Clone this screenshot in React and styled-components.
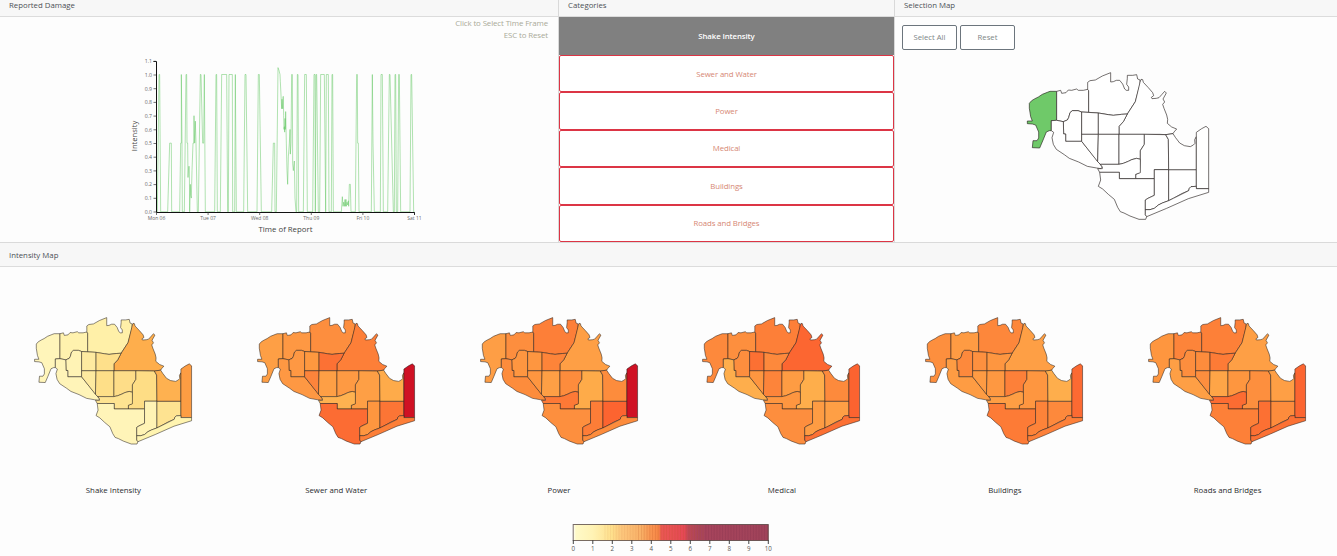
import React from 'react';
import styled, { createGlobalStyle } from 'styled-components';

const Global = createGlobalStyle`
  * { box-sizing: border-box; }
  html, body { margin: 0; padding: 0; }
  body {
    width: 1337px; height: 556px; overflow: hidden; background: #fdfdfd;
    font-family: "Open Sans", "Noto Sans", sans-serif; font-size: 7.8px; color: #4c5056;
  }
`;

const Page = styled.main`
  display: grid;
  grid-template-rows: 242px 314px;
  height: 556px;
`;
const TopRow = styled.div`
  display: grid;
  grid-template-columns: 558px 336px 443px;
`;
const Panel = styled.section`
  display: flex;
  flex-direction: column;
  min-width: 0;
  border-left: ${p => (p.$divided ? '1px solid #d9d9d9' : '0')};
`;
const Header = styled.header`
  flex: none;
  height: ${p => (p.$full ? 25 : 17)}px;
  padding: ${p => (p.$full ? '6px 9px 0' : '0 9px')};
  line-height: ${p => (p.$full ? 12 : 11)}px;
  background: #f7f7f7;
  border-bottom: 1px solid #dcdcdc;
  border-top: ${p => (p.$full ? '1px solid #dadada' : '0')};
`;
const Hints = styled.div`
  height: 26px;
  padding-right: 10px;
  text-align: right;
  line-height: 12px;
  font-size: 7.9px;
  letter-spacing: -0.12px;
  color: #aaaa98;
`;
const Chart = styled.svg`
  display: block;
  margin-left: 120px;
`;
const Categories = styled.div`
  display: grid;
  grid-template-rows: 38px repeat(5, 1fr);
  flex: 1;
`;
const Category = styled.button`
  font: inherit;
  font-size: 7.8px;
  letter-spacing: -0.1px;
  line-height: 12px;
  padding: 0;
  border-radius: ${p => (p.$active ? 0 : 2)}px;
  border: 1px solid ${p => (p.$active ? '#808080' : '#dc3545')};
  background: ${p => (p.$active ? '#808080' : '#fff')};
  color: ${p => (p.$active ? '#fff' : '#d68774')};
  font-weight: ${p => (p.$active ? 600 : 400)};
`;
const Actions = styled.div`
  display: flex;
  gap: 3px;
  padding: 8px 0 0 7px;
`;
const Action = styled.button`
  width: 55px;
  height: 25px;
  padding: 0 0 1px;
  font: inherit;
  font-size: 7.7px;
  color: #7d8587;
  background: #fff;
  border: 1px solid #6c757d;
  border-radius: 2px;
`;
const SelectionDrawing = styled.svg`
  display: block;
  margin: 15px 0 0 120px;
`;
const Maps = styled.div`
  display: grid;
  grid-template-columns: repeat(6, 1fr);
  padding-top: 43px;
`;
const Figure = styled.figure`
  margin: 0;
  display: flex;
  flex-direction: column;
`;
const Caption = styled.figcaption`
  margin-top: 34px;
  padding-left: 4px;
  text-align: center;
  line-height: 12px;
  font-size: 7.8px;
  color: #292b2e;
`;
const Scale = styled.svg`
  display: block;
  margin: 24px 0 0 560px;
`;

const REGIONS = [
  '43,115 50,107 60,101 70,96 82,88 97,82 105,79 125,79 125,166 109,167 109,197 103,197 94,201 83,228 74,249 52,248 54,227 66,227 71,219 71,201 62,180 52,177 37,176 37,168 52,168 47,155 43,130',
  '125,79 137,76 140,85 153,83 160,75 170,76 185,72 190,76 205,76 218,73 221,77 221,142 200,141 189,137 172,137 165,143 161,158 157,165 145,170 125,166',
  '218,73 218,52 225,47 241,45 262,33 287,23 287,51 295,50 304,46 314,46 323,57 329,72 334,76 341,76 341,66 335,58 337,40 337,31 353,31 365,29 368,42 375,45 375,58 361,110 337,147 320,148 295,151 280,149 250,144 221,142 221,77',
  '375,52 378,43 383,44 385,52 400,68 413,83 416,92 409,97 411,101 424,100 432,98 441,88 449,79 454,84 444,102 449,111 443,118 447,130 455,150 458,163 457,175 470,186 485,192 477,201 474,206 452,209 435,208 312,208 312,184 325,170 337,147 361,110',
  '145,170 157,165 161,158 165,143 172,137 189,137 200,141 200,229 152,229 152,207 146,207',
  '200,141 250,144 250,208 200,208',
  '250,144 280,149 295,151 320,148 337,147 325,170 312,184 312,208 250,208',
  '109,167 125,166 145,170 146,207 152,207 152,229 200,229 262,306 258,311 245,309 217,304 191,291 163,280 148,269 124,253 115,238 111,218 116,202 109,197',
  '200,208 250,208 248,290 200,229',
  '250,208 312,208 312,298 256,298 248,290',
  '312,208 388,208 388,238 376,257 376,283 365,280 350,284 340,289 325,295 312,298',
  '388,208 452,209 460,223 461,314 418,314 418,341 362,341 362,328 374,323 376,283 376,257 388,238',
  '256,298 312,298 325,295 340,289 350,284 365,280 376,283 376,323 362,328 362,341 313,341 313,322 254,322 248,311 262,311 262,306',
  '254,322 313,322 313,341 418,341 418,391 399,400 391,405 391,449 395,455 392,463 372,463 345,453 327,444 316,440 308,427 298,403 280,388 263,372 250,364 257,345',
  '418,314 461,314 461,407 442,414 430,420 418,430 405,434 391,434 391,405 399,400 418,391',
  '461,314 544,314 544,364 528,365 523,370 521,377 500,386 475,400 461,407',
  '452,209 474,206 481,217 494,234 508,242 526,245 535,240 540,235 539,224 544,215 544,314 461,314 460,223',
  '544,202 560,191 573,184 581,191 581,371 544,371',
  '391,434 405,434 418,430 430,420 442,414 461,407 475,400 521,377 523,370 528,365 544,364 544,371 581,371 581,382 520,401 455,430 395,455 391,449',
];

const MAPS = [
  ['Shake Intensity', '#fff5ba #fff2ae #fff0a8 #feae4c #fff3b5 #feeaa0 #fee08b #fff4b8 #feeaa0 #fedf88 #fedd88 #fedd85 #fee391 #fff4b8 #fff3b5 #fee391 #feb150 #fd9d43 #fff4b0'],
  ['Sewer and Water', '#fe9f45 #fe9843 #fd8e3e #fd7f38 #fe9843 #fe983f #fc7134 #fe9843 #fd843b #fe9f45 #fe9a43 #fe9f45 #feb250 #fc6c33 #fe963f #fc7535 #feab4a #cf1124 #fd7f38'],
  ['Power', '#fe9e45 #fd8e3e #fd7f38 #fe9f45 #fe9640 #fe9640 #fd8439 #fd8c3c #fe9640 #fe9f45 #fd8c3c #feab49 #fd7936 #fd8f3e #fd7d37 #fc6430 #fd8c3c #cf1124 #fd8c3c'],
  ['Medical', '#fd893c #fd8f3e #fd7f38 #fc6631 #fd8e3e #fc7033 #fd893c #feae4c #fe9640 #fd843a #fe9c43 #feae4b #fe9640 #fd8e3e #fe9c43 #fe9f45 #fd8a3c #fc6330 #fc7033'],
  ['Buildings', '#fd8f3e #fe9b43 #fd873b #fe9f45 #fd893c #fd903f #fe9640 #fe9c43 #fe9b43 #fe9841 #fd8039 #fe9640 #fe9e44 #fd7b36 #fd8339 #fd893c #feae4c #fc6a32 #fd8039'],
  ['Roads and Bridges', '#fe963f #fd843a #fd8038 #fe9f45 #fd8e3e #fd8c3c #fd7b36 #fe9f45 #fd8e3e #fea547 #fe963f #fd8f3e #fc6c32 #fd8038 #fc7033 #fd8c3c #fe9f45 #fc6530 #fc7134'],
];

// Pairs of horizontal offset and intensity, six days of reports.
const SERIES = `108,0 112,0 117,1 119,1 122,0 143,0 149,.5 154,.5 155,0 179,0 182,.5 184,.5 184,1 186,.5 187,0 193,0 198,1 200,1 201,.5 203,.5 204,.25 206,.33 208,.33 209,0 211,.2 212,.12 214,.1 216,.3 219,.5 221,.5 222,.7 224,.5 226,.66 228,.5 232,0 235,0 241,1 243,1 248,.5 251,.5 253,1 256,0 284,0 288,1 290,1 292,0 301,0 305,1 320,1 323,0 325,0 327,1 337,1 338,0 344,0 346,1 349,0 371,0 375,1 378,1 383,0 411,0 415,1 418,1 424,0 455,0 460,.5 464,.5 465,0 469,0 474,1.05 477,1.03 480,1 481,.95 484,.8 485,.75 486,.82 488,.75 489,.84 490,.84 491,.7 492,.6 493,.62 494,.58 495,.68 496,.6 497,.73 499,.5 501,.3 503,.2 505,.4 508,.5 510,.6 511,.42 513,.5 515,1 517,1 518,.35 520,.3 523,.37 525,.1 528,0 530,0 532,1 534,1 536,0 550,0 554,1 559,1 562,0 578,0 582,1 585,1 586,0 588,1 590,1 595,0 599,0 602,1 613,1 617,0 619,1 625,1 627,0 634,0 636,1 638,1 640,0 664,0 667,.11 669,.04 671,.07 673,.04 675,.09 676,.04 678,.09 679,.04 681,.07 683,.05 685,.08 686,.04 688,.2 691,.2 692,.1 693,0 706,0 710,1 712,1 713,.5 715,.5 717,0 754,0 757,1 759,.5 763,0 781,0 783,1 787,1 790,0 803,0 808,1 810,1 820,0 823,0 825,1 827,1 829,0 833,0 836,1 838,1 842,0 870,0 873,1 875,1 881,0 883,0`
  .split(' ')
  .map(s => s.split(',').map(Number))
  .map(([x, v]) => `${(x / 3).toFixed(2)},${(168.8 - v * 137.3).toFixed(2)}`)
  .join(' ');

function County({ fills, stroke = 3 }) {
  return REGIONS.map((points, i) => (
    <polygon key={i} points={points} fill={fills[i] || '#fff'} stroke="#221c1a" strokeOpacity=".62" strokeWidth={stroke} strokeLinejoin="round" />
  ));
}

function IntensityMap({ name, colors }) {
  return (
    <Figure>
      <svg width="222" height="140" viewBox="0 0 222 140">
        <g transform="translate(23.9 1) scale(.2886 .2873)"><County fills={colors.split(' ')} stroke={2.9} /></g>
      </svg>
      <Caption>{name}</Caption>
    </Figure>
  );
}

function DamageChart() {
  return (
    <Chart width="310" height="197" viewBox="0 0 310 197">
      <g fontFamily="Open Sans, Noto Sans, sans-serif">
        <polyline points={SERIES} fill="none" stroke="#5bc45b" strokeOpacity=".6" strokeWidth=".8" />
        <path d="M33.5 18.5H36.5V169.5H294.5V172" fill="none" stroke="#111" />
        {Array.from({ length: 12 }, (_, i) => (
          <g key={i}>
            <path d={`M33.5 ${169 - i * 13.7}H36`} stroke="#333" strokeWidth=".7" />
            <text x="32" y={170.8 - i * 13.7} textAnchor="end" fontSize="5.2" fill="#666">{(i / 10).toFixed(1)}</text>
          </g>
        ))}
        {['Mon 06', 'Tue 07', 'Wed 08', 'Thu 09', 'Fri 10', 'Sat 11'].map((d, i) => (
          <g key={d}>
            <path d={`M${36.5 + i * 51.6} 169V172`} stroke="#333" strokeWidth=".7" />
            <text x={36.5 + i * 51.6} y="177" textAnchor="middle" fontSize="5" fill="#666">{d}</text>
          </g>
        ))}
        <text x="165.5" y="189" textAnchor="middle" fontSize="7.8" fill="#444">Time of Report</text>
        <text transform="translate(17 93) rotate(-90)" textAnchor="middle" fontSize="7.6" fill="#444">Intensity</text>
      </g>
    </Chart>
  );
}

function ColorScale() {
  const stops = [[0, '#fff'], [1.5, '#fffac8'], [10, '#fff3b5'], [20, '#fedf8b'], [25, '#fcc67c'], [35, '#f9b066'], [40, '#f99450'], [44, '#f68545'], [45, '#ea5853'], [57, '#e54855'], [59, '#bc4758'], [65, '#a7445c'], [100, '#a0435a']];
  return (
    <Scale width="220" height="35" viewBox="0 0 220 35">
      <defs>
        <linearGradient id="heat">{stops.map(([o, c]) => <stop key={o} offset={`${o}%`} stopColor={c} />)}</linearGradient>
      </defs>
      <rect x="13" y="4.5" width="195.5" height="16" fill="url(#heat)" />
      {Array.from({ length: 58 }, (_, i) => (
        <path key={i} d={`M${45 + i * 2.8} 5V20`} stroke={i > 35 ? '#782c48' : '#b95424'} strokeWidth=".5" opacity={i < 12 ? '.15' : '.4'} />
      ))}
      <rect x="13.2" y="4.5" width="195" height="16" fill="none" stroke="#4c3c38" strokeOpacity=".75" />
      {Array.from({ length: 11 }, (_, i) => (
        <g key={i}>
          <path d={`M${13.3 + i * 19.5} 20V24`} stroke="#444" />
          <text x={13.3 + i * 19.5} y="31" fontSize="6.2" textAnchor="middle" fill="#555" fontFamily="Open Sans, sans-serif">{i}</text>
        </g>
      ))}
    </Scale>
  );
}

export default function App() {
  return (
    <Page>
      <Global />
      <TopRow>
        <Panel>
          <Header>Reported Damage</Header>
          <Hints>Click to Select Time Frame<br />ESC to Reset</Hints>
          <DamageChart />
        </Panel>
        <Panel $divided>
          <Header>Categories</Header>
          <Categories>
            {MAPS.map(([name], i) => <Category key={name} $active={i === 0}>{name}</Category>)}
          </Categories>
        </Panel>
        <Panel $divided>
          <Header>Selection Map</Header>
          <Actions><Action>Select All</Action><Action>Reset</Action></Actions>
          <SelectionDrawing width="205" height="160" viewBox="0 0 615 480"><County fills={['#6fc969']} /></SelectionDrawing>
        </Panel>
      </TopRow>
      <Panel>
        <Header $full>Intensity Map</Header>
        <Maps>
          {MAPS.map(([name, colors]) => <IntensityMap key={name} name={name} colors={colors} />)}
        </Maps>
        <ColorScale />
      </Panel>
    </Page>
  );
}
